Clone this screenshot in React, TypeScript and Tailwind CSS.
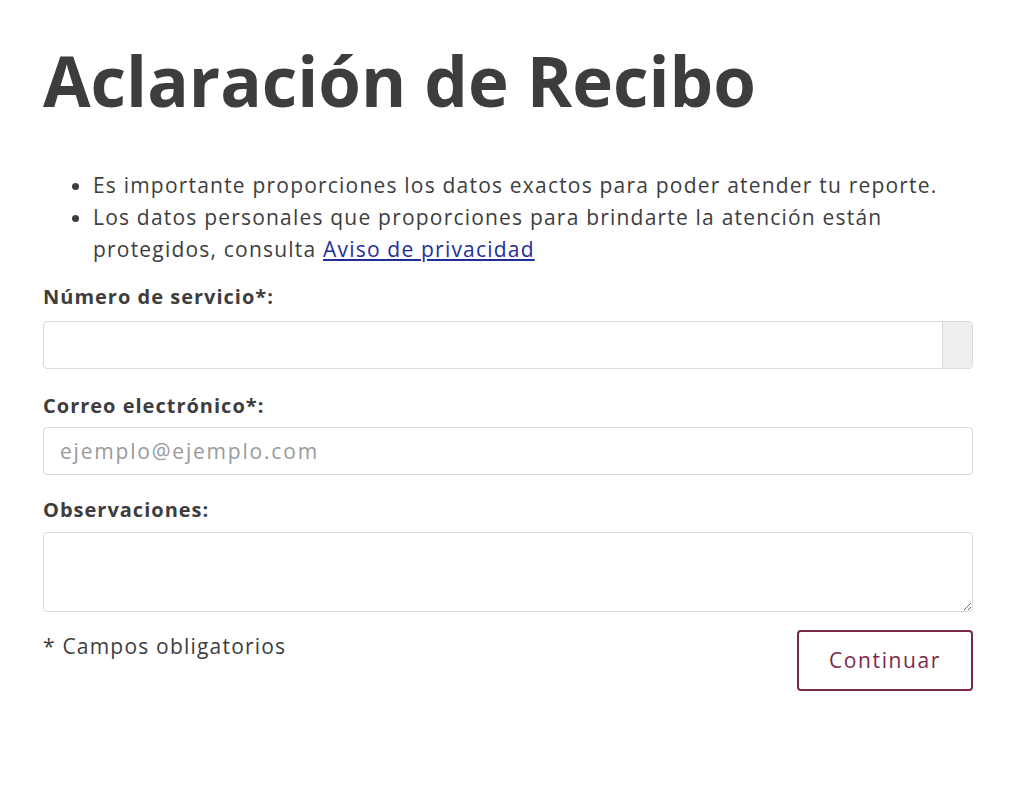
export default function App() {
  return (
    <div className="min-h-[798px] bg-white text-[#3d3d3e] font-['Open_Sans',sans-serif]">
      <div className="w-[930px] ml-[43px] pt-[36px]">
        <h1 className="text-[69px] leading-[88px] font-bold text-[#3d3d3e]">Aclaración de Recibo</h1>

        <ul className="list-disc pl-[50px] mt-[45px] text-[21px] leading-[32px] tracking-[1.2px]">
          <li>Es importante proporciones los datos exactos para poder atender tu reporte.</li>
          <li>
            Los datos personales que proporciones para brindarte la atención están protegidos, consulta{' '}
            <a href="#" className="text-[#1f2f9a] underline">
              Aviso de privacidad
            </a>
          </li>
        </ul>

        <form className="mt-[16px]" onSubmit={(e) => e.preventDefault()}>
          <label className="block text-[20px] leading-[32px] font-bold tracking-[1px]">Número de servicio*:</label>
          <div className="mt-[8px] flex h-[48px] border border-[#d9d9d9] rounded-[4px] overflow-hidden">
            <input className="flex-1 px-4 text-[20px] outline-none" />
            <span className="w-[30px] bg-[#eeeeee] border-l border-[#d9d9d9]" />
          </div>

          <label className="block mt-[21px] text-[20px] leading-[32px] font-bold tracking-[1px]">Correo electrónico*:</label>
          <input
            placeholder="ejemplo@ejemplo.com"
            className="mt-[5px] block w-full h-[48px] px-4 border border-[#d9d9d9] rounded-[4px] text-[21px] tracking-[1.8px] outline-none placeholder:text-[#9a9a9a]"
          />

          <label className="block mt-[19px] text-[20px] leading-[32px] font-bold tracking-[1px]">Observaciones:</label>
          <textarea className="mt-[6px] block w-full h-[80px] px-4 py-2 border border-[#d9d9d9] rounded-[4px] text-[20px] outline-none" />

          <div className="mt-[18px] flex items-start justify-between">
            <p className="text-[21px] leading-[32px] tracking-[1.2px]">* Campos obligatorios</p>
            <button
              type="submit"
              className="w-[176px] h-[61px] border-2 border-[#7b2947] rounded-[4px] text-[#7b2947] text-[21px] tracking-[1.6px]"
            >
              Continuar
            </button>
          </div>
        </form>
      </div>
    </div>
  )
}
